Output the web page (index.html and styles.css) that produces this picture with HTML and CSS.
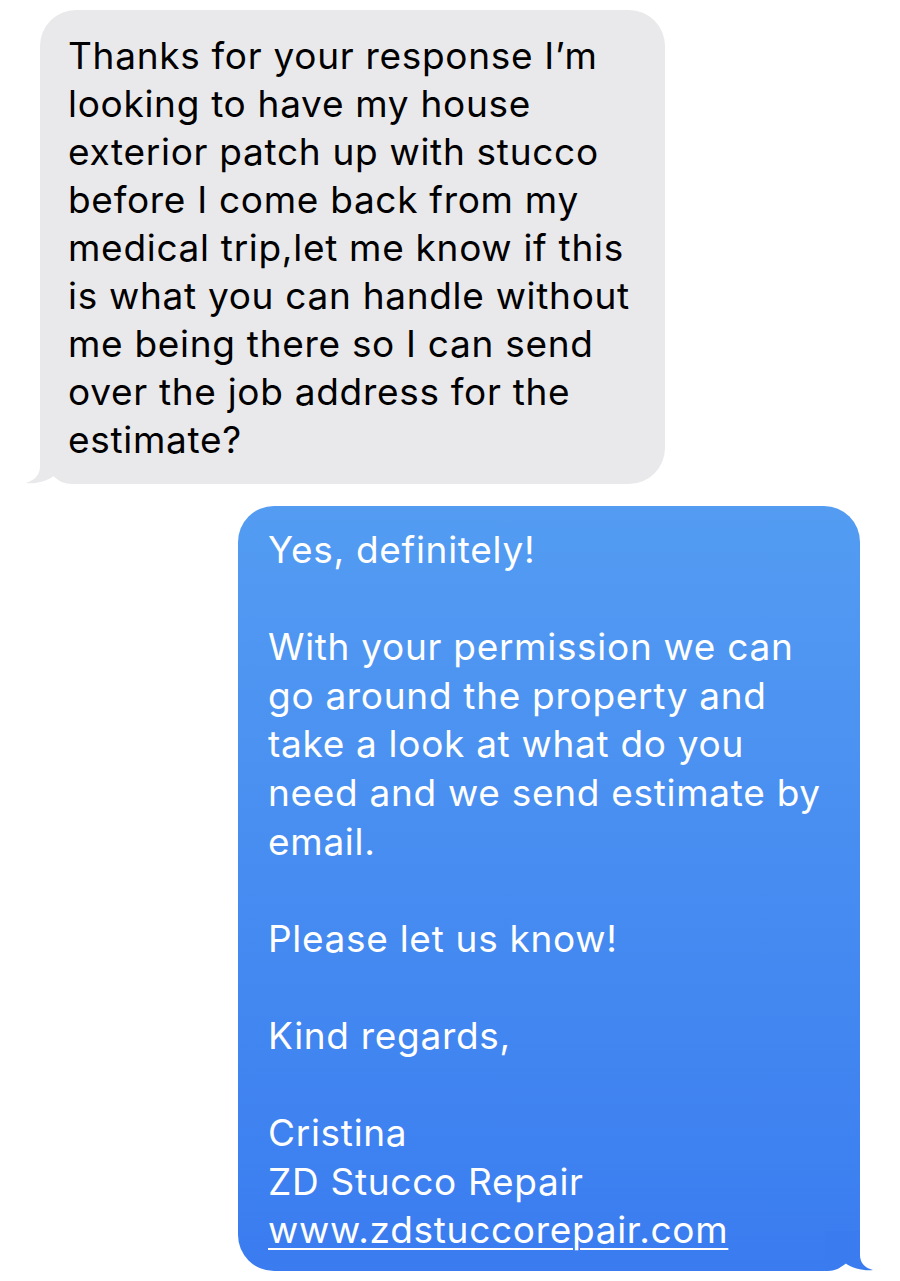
FILE: index.html
```html
<!DOCTYPE html>
<html lang="en">
<head>
  <meta charset="UTF-8">
  <meta name="viewport" content="width=device-width, initial-scale=1.0">
  <title>Messages</title>
  <link rel="stylesheet" href="styles.css">
</head>
<body>

  <div class="thread">
    <div class="bubble received">
      <svg class="tail tail-left" viewBox="0 0 50 40" width="50" height="40">
        <path d="M15,0 L15,22 C15,31 10,36 1,39 C10,40 20,38 29,32 C33,37 39,40 48,40 L50,40 L50,0 Z" />
      </svg>
      <p>Thanks for your response I’m<br>looking to have my house<br>exterior patch up with stucco<br>before I come back from my<br>medical trip,let me know if this<br>is what you can handle without<br>me being there so I can send<br>over the job address for the<br>estimate?</p>
    </div>

    <div class="bubble sent">
      <svg class="tail tail-right" viewBox="0 0 50 40" width="50" height="40">
        <path d="M35,0 L35,24 C35,32 40,37 48,39 C40,40 28,38 20,32 C16,37 10,40 2,40 L0,40 L0,0 Z" />
      </svg>
      <p>Yes, definitely!</p>
      <p>With your permission we can<br>go around the property and<br>take a look at what do you<br>need and we send estimate by<br>email.</p>
      <p>Please let us know!</p>
      <p>Kind regards,</p>
      <p>Cristina<br>ZD Stucco Repair<br><a href="#">www.zdstuccorepair.com</a></p>
    </div>
  </div>

</body>
</html>
```

FILE: styles.css
```css
body {
  margin: 0;
  background-color: #ffffff;
  font-family: Inter, "Noto Sans", sans-serif;
}
.thread {
  display: flex;
  flex-direction: column;
  gap: 22px;
  padding: 10px 40px;
}
.bubble {
  position: relative;
  border-radius: 36px;
  font-size: 37px;
  letter-spacing: 0.7px;
}
.bubble p {
  position: relative;
  margin: 0;
}
.received {
  align-self: flex-start;
  width: 597px;
  padding: 22px 0 20px 28px;
  line-height: 48px;
  background-color: #e9e9eb;
  color: #000000;
}
.sent {
  align-self: flex-end;
  width: 592px;
  padding: 20px 0 16px 30px;
  line-height: 48.6px;
  background: linear-gradient(180deg, #539cf2 0%, #3a7cf0 100%);
  color: #ffffff;
}
.sent p + p {
  margin-top: 48.6px;
}
.sent a {
  color: #ffffff;
  text-decoration: underline;
  text-decoration-thickness: 2px;
  text-underline-offset: 5px;
}
.tail {
  position: absolute;
  bottom: 0;
}
.tail-left {
  left: -15px;
  fill: #e9e9eb;
}
.tail-right {
  right: -15px;
  fill: #3a7cf0;
}
```
